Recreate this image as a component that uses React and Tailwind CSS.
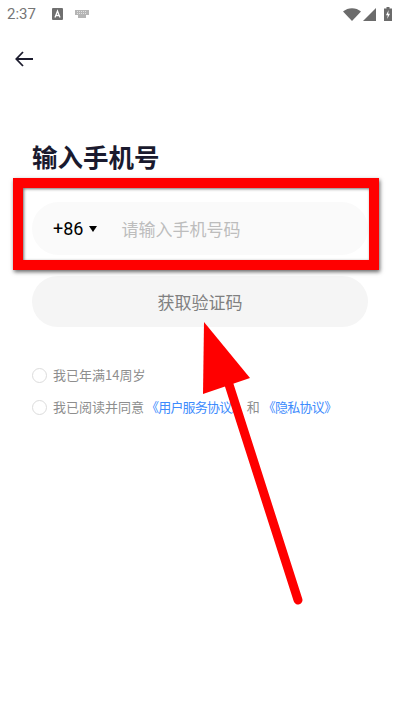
const cjk = { fontFamily: '"Noto Sans CJK SC", "Liberation Sans", sans-serif' };

const StatusBar = () => (
  <div className="flex items-center h-[28px] pl-[7px] pr-[8px] text-[#757575]">
    <span className="text-[15px] leading-none w-[38px]" style={{ fontFamily: 'Roboto, sans-serif' }}>2:37</span>
    <svg width="11" height="12" viewBox="0 0 11 12" className="ml-[7px]">
      <rect width="11" height="12" rx="1" fill="#6f6f6f" />
      <path d="M3 9.5 5.5 3 8 9.5M4 7.5h3" stroke="#fff" strokeWidth="1.3" fill="none" />
    </svg>
    <svg width="14" height="8" viewBox="0 0 14 8" className="ml-[12px]">
      <path d="M0 0h14v5h-3v3H3V5H0z" fill="#b5b5b5" />
      <path d="M2 1.5h10M2 3.5h10" stroke="#fff" strokeWidth=".6" strokeDasharray="1 1" />
    </svg>
    <div className="ml-auto flex items-center">
      <svg width="18" height="13" viewBox="0 0 18 13">
        <path d="M0 3.5C5-1 13-1 18 3.5L9 13z" fill="#6b6b6b" />
      </svg>
      <svg width="13" height="13" viewBox="0 0 13 13" className="ml-[2px]">
        <path d="M13 0v13H0z" fill="#6b6b6b" />
      </svg>
      <svg width="8" height="14" viewBox="0 0 8 14" className="ml-[8px]">
        <path d="M2.5 0h3v1.500H8V14H0V1.500h2.500z" fill="#6b6b6b" />
        <path d="M4.600 3 2 8.200h1.800L3.200 12 6 6.800H4.200z" fill="#fff" />
      </svg>
    </div>
  </div>
);

// red annotation drawn on top of the screenshot
const Annotation = () => (
  <>
    <div className="absolute left-[13px] top-[178px] w-[366px] h-[92px] border-[10px] border-[#ff0000] shadow-[1px_2px_4px_rgba(0,0,0,0.6),inset_1px_1px_3px_rgba(0,0,0,0.55)]" />
    <svg className="absolute left-0 top-0" width="400" height="712" viewBox="0 0 400 712">
      <path d="M225 372 298 600" stroke="#ff0000" strokeWidth="9" strokeLinecap="round" fill="none" />
      <path d="M204 322 250 378 203 394z" fill="#ff0000" />
    </svg>
  </>
);

export default function App() {
  return (
    <div className="relative w-[400px] h-[712px] bg-white overflow-hidden" style={cjk}>
      <StatusBar />
      <button className="block ml-[15px] mt-[23px]" aria-label="返回">
        <svg width="18" height="16" viewBox="0 0 18 16" className="block" fill="none" stroke="#1c1c2e" strokeWidth="1.800">
          <path d="M18 8H1.500M8 1 1.300 8 8 15" />
        </svg>
      </button>
      <div className="pl-[32px] pr-[32px] pt-[70px]">
        <h1 className="text-[25.5px] leading-[38px] font-bold text-[#1a1a2e]">输入手机号</h1>
        <div className="mt-[27px] flex items-center h-[53px] rounded-full bg-[#fafafa] pl-[21px]">
          <span className="text-[18px] text-black" style={{ fontFamily: 'Roboto, sans-serif' }}>+86</span>
          <span className="ml-[6px] w-0 h-0 border-x-[4px] border-x-transparent border-t-[6px] border-t-black" />
          <span className="ml-[24px] text-[17px] text-[#bdbdbd]">请输入手机号码</span>
        </div>
        <button className="mt-[21px] w-full h-[51px] rounded-full bg-[#f5f5f5] text-[17px] text-[#808080]">
          获取验证码
        </button>
        <div className="mt-[40px] flex flex-col gap-[16px] text-[13px] text-[#8e8e8e]">
          <label className="flex items-center h-[16px]">
            <span className="w-[15px] h-[15px] rounded-full border border-[#dcdcdc]" />
            <span className="ml-[6px]">我已年满14周岁</span>
          </label>
          <label className="flex items-center h-[16px]">
            <span className="w-[15px] h-[15px] rounded-full border border-[#dcdcdc]" />
            <span className="ml-[6px]">我已阅读并同意</span>
            <span className="ml-[2px] tracking-[-0.8px] text-[#3d8bfd]">《用户服务协议》</span>
            <span className="mx-[3px]">和</span>
            <span className="tracking-[-0.7px] text-[#3d8bfd]">《隐私协议》</span>
          </label>
        </div>
      </div>
      <Annotation />
    </div>
  );
}
